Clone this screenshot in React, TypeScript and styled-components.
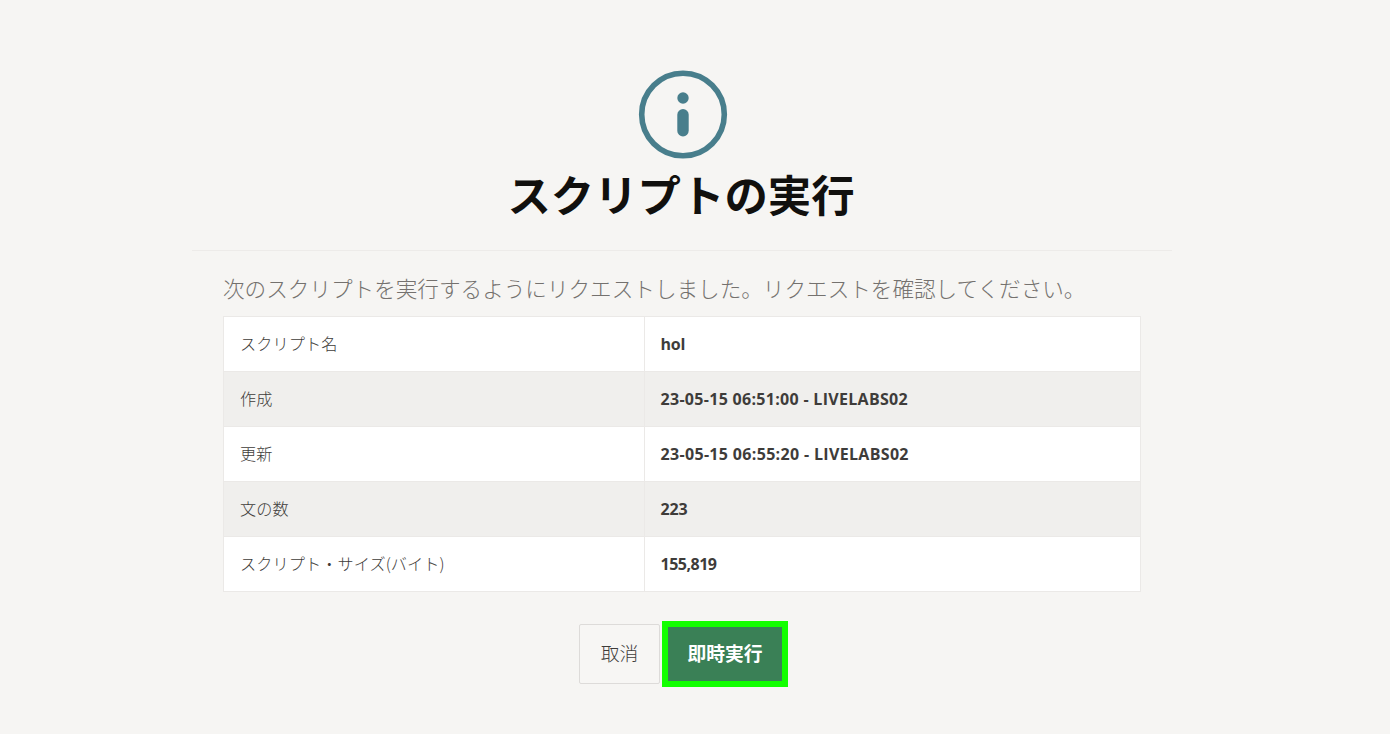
import React from "react";
import styled, { createGlobalStyle } from "styled-components";

const GlobalStyle = createGlobalStyle`
  *, *::before, *::after { box-sizing: border-box; }
  body {
    margin: 0;
    background: #f6f5f3;
    color: #3e3c3a;
    font-family: "Noto Sans CJK JP", sans-serif;
    font-size: 16px;
    font-weight: 300;
  }
`;

const Page = styled.main`
  display: flex;
  flex-direction: column;
  align-items: center;
  height: 734px;
  padding: 70px 26px 0 0;
  overflow: hidden;
`;

const Wizard = styled.section`
  display: flex;
  flex-direction: column;
  width: 980px;
`;

const Header = styled.header`
  display: flex;
  flex-direction: column;
  align-items: center;
  height: 181px;
  border-bottom: 1px solid #edebe9;
`;

const InfoIcon = styled.svg`
  display: block;
  flex: none;
  width: 90px;
  height: 90px;
  margin-left: 2px;
`;

const Title = styled.h1`
  margin: 1px 2px 0 0;
  color: #11100e;
  font-size: 43.4px;
  font-weight: 700;
  line-height: 64px;
  white-space: nowrap;
`;

const Content = styled.div`
  padding: 21px 31px 0;
`;

const Message = styled.p`
  margin: 0;
  color: #74716e;
  font-size: 21.6px;
  line-height: 32px;
  height: 44px;
  white-space: nowrap;
`;

const Report = styled.table`
  width: 918px;
  border-collapse: collapse;
  table-layout: fixed;
`;

const Row = styled.tr`
  height: 55px;
  background: #ffffff;
  &:nth-child(even) { background: #f0efed; }
`;

const Label = styled.th`
  width: 421px;
  padding: 0 16px 2px;
  border: 1px solid #ebe9e7;
  font-size: 16.15px;
  font-weight: 300;
  letter-spacing: 0.1px;
  text-align: left;
`;

const Value = styled.td<{ $tracking: number }>`
  padding: 0 15.5px;
  border: 1px solid #ebe9e7;
  font-family: "Open Sans", sans-serif;
  font-weight: 700;
  letter-spacing: ${(p) => p.$tracking}px;
`;

const Actions = styled.footer`
  display: flex;
  align-items: center;
  justify-content: center;
  gap: 2px;
  margin-top: 29px;
  padding-left: 3px;
`;

const Button = styled.button<{ $primary?: boolean }>`
  width: ${(p) => (p.$primary ? 126 : 81)}px;
  height: ${(p) => (p.$primary ? 66 : 60)}px;
  padding: 0 0 2px;
  border: ${(p) => (p.$primary ? "6px solid #12ff00" : "1px solid #dddbd9")};
  border-radius: ${(p) => (p.$primary ? 0 : 2)}px;
  background: ${(p) => (p.$primary ? "#3a8056" : "#f7f6f4")};
  color: ${(p) => (p.$primary ? "#ffffff" : "#3e3c3a")};
  font-family: inherit;
  font-size: 18.8px;
  font-weight: ${(p) => (p.$primary ? 700 : 300)};
  line-height: 28px;
`;

const details = [
  { label: "スクリプト名", value: "hol", tracking: -0.2 },
  { label: "作成", value: "23-05-15 06:51:00 - LIVELABS02", tracking: 0.3 },
  { label: "更新", value: "23-05-15 06:55:20 - LIVELABS02", tracking: 0.33 },
  { label: "文の数", value: "223", tracking: -0.2 },
  { label: "スクリプト・サイズ(バイト)", value: "155,819", tracking: -0.5 },
];

export default function App() {
  return (
    <Page>
      <GlobalStyle />
      <Wizard>
        <Header>
          <InfoIcon viewBox="0 0 90 90" aria-hidden="true">
            <circle cx="45" cy="44.5" r="41.3" fill="none" stroke="#487e8c" strokeWidth="5.6" />
            <circle cx="45" cy="28" r="5.7" fill="#487e8c" />
            <rect x="39.3" y="39" width="11.4" height="27.5" rx="5.7" fill="#487e8c" />
          </InfoIcon>
          <Title>スクリプトの実行</Title>
        </Header>
        <Content>
          <Message>次のスクリプトを実行するようにリクエストしました。リクエストを確認してください。</Message>
          <Report>
            <tbody>
              {details.map(({ label, value, tracking }) => (
                <Row key={label}>
                  <Label scope="row">{label}</Label>
                  <Value $tracking={tracking}>{value}</Value>
                </Row>
              ))}
            </tbody>
          </Report>
          <Actions>
            <Button type="button">取消</Button>
            <Button type="button" $primary>即時実行</Button>
          </Actions>
        </Content>
      </Wizard>
    </Page>
  );
}
